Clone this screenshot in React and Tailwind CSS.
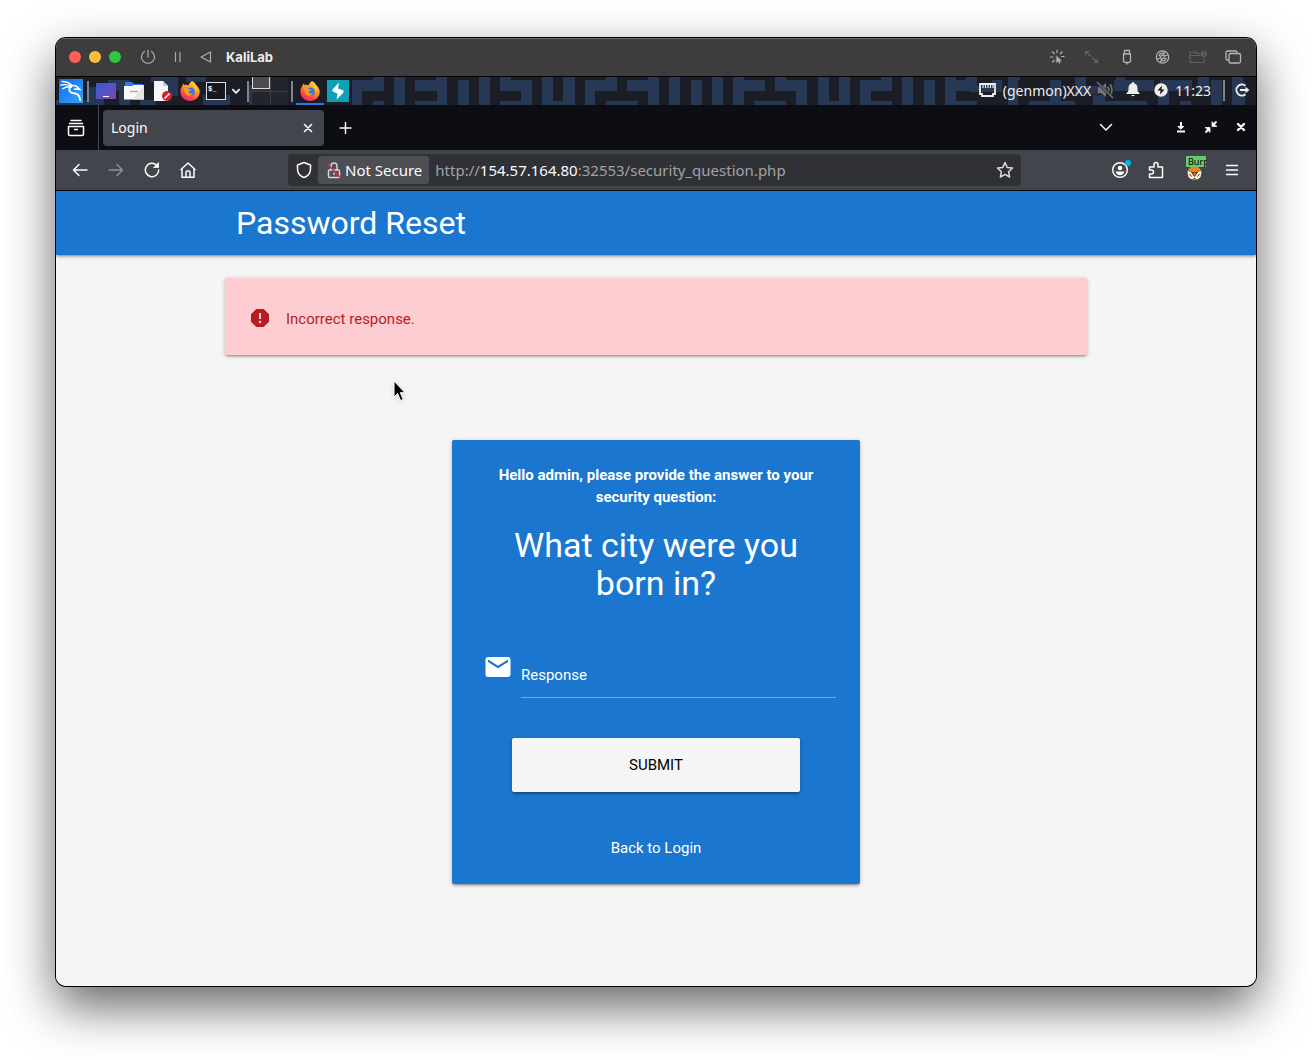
import React, { useState } from 'react';
import { MdEmail, MdReport } from 'react-icons/md';

const PanelPattern = () => (
  <svg
    viewBox="0 0 1200 28"
    preserveAspectRatio="xMinYMin slice"
    className="absolute inset-0 w-full h-full"
    aria-hidden="true"
  >
    <g fill="#263854">
      <path d="M0 23h35v5H0zM32 10h16v18H32zM52 3h22v11H52zM63 14h11v14H63zM84 23h16v5H84zM95 0h27v5H95zM110 5h12v14h-12zM130 0h20v5h-20zM147 18h27v10h-27zM193 8h10v20h-10z" />
      <path d="M296 3h21V0h11v14h-22v14h-10zM317 24h11v4h-11zM338 0h11v28h-11zM359 3h21V0h11v28h-32v-4h22V14h-22zM402 3h11v25h-11zM423 0h11v28h-11zM444 0h11v3h21v25h-32v-4h21V14h-21zM486 0h11v24h10V0h12v28h-33zM529 3h21V0h11v14h-22v14h-10zM550 24h32v4h-32zM571 3h21V0h11v28h-11V14h-21z" />
      <path d="M613 0h11v28h-11zM635 3h11v25h-11zM656 0h11v28h-11zM677 0h11v3h21v11h-21v14h-11zM698 24h32v4h-32zM719 0h11v3h21v25h-11V14h-21zM762 0h11v24h10V0h11v28h-32zM804 3h21V0h11v14h-21v10h21v4h-32zM846 0h11v28h-11zM868 3h11v25h-11zM889 0h11v3h10V0h11v14h-21v10h21v4h-32z" />
      <path d="M952 0h12v3h-12zM936 3h10v12h-32V9h22zM952 3h10v25h-10zM973 24h22v4h-22zM994 3h11v21h14v4h-25zM1019 0h11v9h22v8h-33zM1058 3h40v11h-40zM1037 18h12v6h42v4h-54zM1060 0h9v8h-9zM1104 3h32v11h-32zM1102 14h11v14h-11zM1124 24h11v4h-11zM1142 0h11v14h-11zM1155 3h11v25h-11zM1176 0h11v5h-11zM1176 5h13v23h-13z" />
    </g>
  </svg>
);

const Line = ({ size = 18, width = 1.5, children, className = '' }) => (
  <svg
    width={size}
    height={size}
    viewBox="0 0 18 18"
    fill="none"
    stroke="currentColor"
    strokeWidth={width}
    strokeLinecap="round"
    strokeLinejoin="round"
    className={className}
    aria-hidden="true"
  >
    {children}
  </svg>
);

const KaliDragon = () => (
  <svg
    width="24"
    height="24"
    viewBox="0 0 24 24"
    fill="none"
    stroke="currentColor"
    strokeLinecap="round"
    strokeLinejoin="round"
    aria-hidden="true"
  >
    <path d="M3 2.500c4 0 7.500 1.500 10 4M2 6c4-.8 7-.3 10 1.200M3.500 9.800C6 8.200 9 7.500 12 7.800" strokeWidth="1.300" />
    <path d="M12 6.800c3-.6 5.500 0 7 1.700l2.200 2.300-3.200-.8-2.500.2" strokeWidth="1.500" />
    <path d="M12.500 7.500c-2.500 1-3 4.200-.8 5.700 2 1.300 5.300.8 7.300 2.600 1.500 1.400 2 3 2.200 5.200" strokeWidth="1.900" />
  </svg>
);

const Firefox = () => (
  <svg width="20" height="20" viewBox="0 0 20 20" aria-hidden="true">
    <defs>
      <linearGradient id="ff-body" x1="0.8" y1="0" x2="0.3" y2="1">
        <stop offset="0" stopColor="#ffe03a" />
        <stop offset="0.45" stopColor="#ff9222" />
        <stop offset="0.75" stopColor="#ff4a45" />
        <stop offset="1" stopColor="#e8267c" />
      </linearGradient>
    </defs>
    <path
      fill="url(#ff-body)"
      d="M12 0c3 1.5 3.700 3 4.500 4.500 2 1.500 3.300 4 3.200 6.500-.3 5.300-4.500 9-9.700 9S.4 16 .4 10.500C.4 8 1.300 6 2.600 4.400L3 2.500l1.700 1.600C6 3.500 7.500 3.800 8.500 4.500 9 2.800 10.500 1 12 0z"
    />
    <circle cx="10.500" cy="10.800" r="4.300" fill="#3478e8" />
    <path fill="#ff9c20" d="M4.500 7c2-.7 3.500 0 4.200 1.200l2.300.3c-.3 1.300-1.700 1.700-2.400 2.200.3 1.800 2 2.600 4 1.600-1 2.500-4 3-6 1.500C4.700 12.200 4 9.500 4.500 7z" />
    <path fill="#ffd43a" d="M12 1c1.500 2 1.500 3.500 3 5.500 1 1.500 1.200 3.500.6 5.500 2-2.500 1.500-6-.6-8.300C14 3 12.700 2 12 1z" />
  </svg>
);

const WindowTitleBar = () => (
  <div className="h-[39px] bg-[#3d3d3d] border-b border-black flex items-center justify-between pl-[13px] pr-[14px] shadow-[inset_0_1px_0_#6b6b6b]">
    <div className="flex items-center">
      <div className="flex gap-2">
        <button aria-label="Close window" className="w-3 h-3 rounded-full bg-[#ff5f57]" />
        <button aria-label="Minimize window" className="w-3 h-3 rounded-full bg-[#febc3e]" />
        <button aria-label="Zoom window" className="w-3 h-3 rounded-full bg-[#2bc840]" />
      </div>
      <div className="flex items-center gap-[11px] ml-[18px] text-[#adadad]">
        <button aria-label="Power">
          <Line width={1.2}>
            <path d="M9 2v7M5.500 3.500a6.500 6.500 0 1 0 7 0" />
          </Line>
        </button>
        <button aria-label="Pause">
          <Line width={1.2}>
            <path d="M7.500 4.500v9M12 4.500v9" />
          </Line>
        </button>
        <button aria-label="Restart">
          <Line width={1.2}>
            <path d="M13.500 4v10L4 9z" />
          </Line>
        </button>
      </div>
      <h1 className="ml-[11px] pt-px font-['Inter',sans-serif] text-[13px] font-bold text-[#ececec]">KaliLab</h1>
    </div>
    <div className="flex items-center gap-[17px] text-[#b5b5b5]">
      <button aria-label="Capture input">
        <Line width={1.2}>
          <path d="M8 2v2.500M3.500 4l1.700 1.700M13 4l-1.700 1.700M1.500 9H4M12.500 8.500H15M3.500 14l1.700-1.700" />
          <path d="M7.500 8l5 4.700-2.200.2 1 2.100-1 .4-1-2.200-1.800 1.300z" fill="currentColor" strokeWidth="0.4" />
        </Line>
      </button>
      <button aria-label="Resize" className="text-[#666]">
        <Line width={1.2}>
          <path d="M1.500 7V3.500H5M13.500 11v3.500H10M2 4l4.500 4M13 14l-4.500-4" />
        </Line>
      </button>
      <button aria-label="USB devices">
        <Line width={1.3}>
          <path d="M5.500 6V2.500h5V6M4.500 6h7v7.500L10 14.500H6l-1.500-1zM8 14.500V16" />
        </Line>
      </button>
      <button aria-label="Drives">
        <Line width={1.2}>
          <circle cx="8.500" cy="9" r="6.200" />
          <circle cx="8.500" cy="9" r="1.800" />
          <path d="M5 8a4 4 0 0 1 4-3M12 10a4 4 0 0 1-4 3M10.500 4l-1 3M6.500 14l1-3M13.500 7l-3 1M3.500 11l3-1" />
        </Line>
      </button>
      <button aria-label="Shared folder" className="text-[#626262]">
        <Line width={1.2}>
          <path d="M12 5.500H8L6.500 4H1v10.500h14V10M1 7.500h10" />
          <circle cx="15" cy="6" r="3" fill="currentColor" stroke="none" />
          <path d="M15 4.500v3" stroke="#3d3d3d" />
        </Line>
      </button>
      <button aria-label="Windows">
        <Line width={1.3}>
          <path d="M4.500 12H3.500A1.500 1.500 0 0 1 2 10.500V4.500A1.500 1.500 0 0 1 3.500 3h8A1.500 1.500 0 0 1 13 4.500v1" />
          <rect x="5" y="5.500" width="11.500" height="9.500" rx="1.500" />
        </Line>
      </button>
    </div>
  </div>
);

const Separator = () => <span className="w-[2px] h-[21px] bg-[#80848c] mx-[3px]" />;

const DesktopPanel = () => (
  <div className="relative h-7 bg-[#1c1e27] overflow-hidden">
    <PanelPattern />
    <div className="relative h-full flex items-center justify-between text-[#eeeeec]">
      <div className="flex items-center h-full pl-[3px]">
        <button
          aria-label="Applications"
          className="w-6 h-6 mr-px flex items-center justify-center text-white bg-linear-to-br from-[#1768e8] to-[#35a4fb]"
        >
          <KaliDragon />
        </button>
        <Separator />
        <button aria-label="Show desktop" className="w-7 flex justify-center">
          <span className="w-5 h-4 bg-linear-to-br from-[#2d59cd] to-[#7749b3] flex items-end justify-center pb-[2px]">
            <span className="w-[6px] h-px bg-white" />
          </span>
        </button>
        <button aria-label="File manager" className="w-7 flex justify-center">
          <svg width="20" height="18" viewBox="0 0 20 18">
            <path d="M1 0h7l2 2h9v5H1z" fill="#3679e8" />
            <path d="M0 4h8l2-1h10v14.500H0z" fill="#f8f8f8" />
            <path d="M20 3v14.500H9z" fill="#e5e5e5" />
            <path d="M6 9.500h8" stroke="#aaa" strokeWidth="1.500" />
          </svg>
        </button>
        <button aria-label="Text editor" className="w-7 flex justify-center">
          <svg width="20" height="21" viewBox="0 0 20 21">
            <path d="M2 0h9l5 5v15H2z" fill="#f7f7f7" />
            <path d="M11 0l5 5h-5z" fill="#c9c9c9" />
            <circle cx="15" cy="15" r="5" fill="#d1232a" />
            <path d="M12.500 17.500l5-5" stroke="#fff" strokeWidth="1.600" />
          </svg>
        </button>
        <button aria-label="Firefox" className="w-7 flex justify-center">
          <Firefox />
        </button>
        <button aria-label="Terminal" className="w-6 flex justify-center">
          <svg width="20" height="18" viewBox="0 0 20 18" fill="none">
            <rect x="0.500" y="0.500" width="19" height="17" fill="#15171c" stroke="#dcdcdc" />
            <text x="2" y="9" fontSize="7" fontFamily="Liberation Mono, monospace" fontWeight="700" fill="#fff">
              $_
            </text>
          </svg>
        </button>
        <button aria-label="More launchers" className="w-4 flex justify-center">
          <Line size={16} width={2}>
            <path d="M5.500 7.500L9 11l3.500-3.500" />
          </Line>
        </button>
        <Separator />
        <div className="w-9 h-full grid grid-cols-2 grid-rows-2 gap-px bg-[#3b3d49]">
          <button aria-label="Workspace 1" className="bg-[#2d2f3c] flex">
            <span className="w-full h-3 border border-[#dcdcdc] border-t-0 bg-[#4c4c50]" />
          </button>
          <button aria-label="Workspace 2" className="bg-[#22242e]" />
          <button aria-label="Workspace 3" className="bg-[#22242e]" />
          <button aria-label="Workspace 4" className="bg-[#22242e]" />
        </div>
        <Separator />
        <button
          aria-label="Firefox window"
          className="w-7 h-full flex items-center justify-center shadow-[inset_0_-2px_0_#2b76ec]"
        >
          <Firefox />
        </button>
        <button aria-label="Burp Suite window" className="w-7 flex justify-center">
          <svg width="22" height="22" viewBox="0 0 22 22">
            <path d="M0 0h22v22H0z" fill="#0fa0b8" />
            <path d="M12 2.500L5.500 9.500v2l5 2-1 6L16.500 12.500v-2L11 8.500z" fill="#fff" />
          </svg>
        </button>
      </div>
      <div className="flex items-center h-full pb-[2px] text-[14px]">
        <svg width="17" height="16" viewBox="0 0 17 16" fill="none" className="mr-[7px]" aria-hidden="true">
          <path d="M1 2h15v10h-2v2H3v-2H1z" stroke="currentColor" strokeWidth="1.800" />
          <path d="M4 3v3M6.500 3v3M9 3v3M11.500 3v3M14 3v3" stroke="currentColor" strokeWidth="1.200" />
        </svg>
        <span>(genmon)XXX</span>
        <button aria-label="Volume muted" className="w-7 flex justify-center text-[#74767a]">
          <svg width="18" height="18" viewBox="0 0 18 18" fill="none" stroke="currentColor" strokeWidth="1.500">
            <path d="M2 6h3l5-4v14l-5-4H2z" fill="currentColor" stroke="none" />
            <path d="M12 6q2 3 0 6M14 3q4 6 0 12" />
            <path d="M1 1l16 16" stroke="#1c1e27" strokeWidth="3" />
            <path d="M1 1l16 16" />
          </svg>
        </button>
        <button aria-label="Notifications" className="w-7 flex justify-center">
          <svg width="14" height="16" viewBox="0 0 14 16" fill="currentColor">
            <path d="M7 0a1.500 1.500 0 0 1 1.500 1.500C11 2.200 11.500 4 11.500 7c0 2 .5 3 2 4v1H.5v-1c1.500-1 2-2 2-4 0-3 .5-4.800 3-5.500A1.500 1.500 0 0 1 7 0zM5 13h4q-2 2.500-4 0z" />
          </svg>
        </button>
        <button aria-label="Power manager" className="w-7 flex justify-center">
          <svg width="14" height="14" viewBox="0 0 14 14">
            <circle cx="7" cy="7" r="6.700" fill="currentColor" />
            <path d="M8 2.500L3.500 7.500h3L6 11.500l4.500-5h-3z" fill="#1c1e27" />
          </svg>
        </button>
        <time className="mr-[9px]">11:23</time>
        <Separator />
        <button aria-label="Log out" className="w-7 flex justify-center">
          <svg width="15" height="14" viewBox="0 0 15 14" fill="none" stroke="currentColor" strokeWidth="1.900">
            <path d="M10.500 2.800A5.500 5.500 0 1 0 10.500 11.200M5 7h7" />
            <path d="M10.500 3.800L14.500 7l-4 3.200z" fill="currentColor" stroke="none" />
          </svg>
        </button>
      </div>
    </div>
  </div>
);

const BrowserTabs = () => (
  <div className="h-[45px] bg-[#0d0e13] flex items-center justify-between text-[#fbfbfe]">
    <div className="flex items-center h-full">
      <button aria-label="List all tabs" className="w-[43px] pr-[2px] h-full flex items-center justify-center border-r border-[#45474f]">
        <Line>
          <path d="M4 1.500h10M2.500 4.500h13M1.500 7.500h15v7.500a1.500 1.500 0 0 1-1.500 1.500H3A1.500 1.500 0 0 1 1.500 15zM7.500 10.500h3" />
        </Line>
      </button>
      <div className="ml-1 w-[221px] h-9 rounded bg-[#43454d] flex items-center justify-between pl-2 pr-[7px]">
        <span className="text-[14px]">Login</span>
        <button aria-label="Close tab">
          <Line width={1.6}>
            <path d="M5.500 5.500l7 7M12.500 5.500l-7 7" />
          </Line>
        </button>
      </div>
      <button aria-label="New tab" className="ml-3">
        <Line>
          <path d="M9.500 3.500v11M4 9h11" />
        </Line>
      </button>
    </div>
    <div className="flex items-center pr-[6px] pb-[2px] gap-3">
      <button aria-label="Tab list" className="mr-[45px]">
        <Line>
          <path d="M3.500 6.500L9 12l5.500-5.500" />
        </Line>
      </button>
      <button aria-label="Minimize">
        <Line width={2}>
          <path d="M9 4v6M5 13.500h8" strokeLinecap="butt" />
          <path d="M6.200 8.500h5.600L9 11z" fill="currentColor" strokeWidth="1" />
        </Line>
      </button>
      <button aria-label="Restore">
        <Line width={1.8}>
          <path d="M14 4l-3 3M4 14l3-3" />
          <path d="M10 4v4.500h4.500zM3.500 9.500H8V14z" fill="currentColor" strokeWidth="0.800" />
        </Line>
      </button>
      <button aria-label="Close">
        <Line width={2.4}>
          <path d="M6 6l6 6M12 6l-6 6" />
        </Line>
      </button>
    </div>
  </div>
);

const BrowserToolbar = () => (
  <div className="h-[41px] bg-[#43454d] border-b border-[#0d0e13] flex items-center px-[6px] text-[#fbfbfe]">
    <button aria-label="Back" className="w-9 flex justify-center">
      <Line>
        <path d="M16 9H2.500M8 3.500L2.500 9 8 14.500" />
      </Line>
    </button>
    <button aria-label="Forward" className="w-9 flex justify-center text-[#8f9096]">
      <Line>
        <path d="M2 9h13.500M10 3.500L15.500 9 10 14.500" />
      </Line>
    </button>
    <button aria-label="Reload" className="w-9 flex justify-center">
      <Line>
        <path d="M13.500 4A6.700 6.700 0 1 0 15.700 9" />
        <path d="M15.500 2v4.500H11z" fill="currentColor" strokeWidth="0.800" />
      </Line>
    </button>
    <button aria-label="Home" className="w-9 flex justify-center">
      <Line>
        <path d="M2 8.500L9 2l7 6.500M3 8v8.300h12V8M7 16v-4.500a1.500 1.500 0 0 1 1.500-1.500h1a1.500 1.500 0 0 1 1.500 1.500V16" />
      </Line>
    </button>
    <div className="flex-1 h-8 ml-[82px] mr-[81px] rounded bg-[#303136] flex items-center px-[7px] text-[15px]">
      <Line>
        <path d="M9 1.500l6.500 2.500v4c0 4-2.500 7-6.500 8.500C5 15 2.500 12 2.500 8V4z" />
      </Line>
      <button className="h-7 ml-[5px] px-[7px] rounded-[3px] bg-[#4c4e54] flex items-center gap-[2px] whitespace-nowrap">
        <Line className="text-[#d5d5da]">
          <rect x="3.500" y="9" width="11" height="7.500" rx="1" />
          <path d="M6 9V5a3 3 0 0 1 6 0v4M9 12v1.500" />
          <path d="M3 3.500L15.500 16.500" stroke="#e22850" />
        </Line>
        Not Secure
      </button>
      <div className="flex-1 ml-[6px] text-[#a1a2a8]">
        http://<span className="text-[#fbfbfe]">154.57.164.80</span>:32553/security_question.php
      </div>
      <button aria-label="Bookmark this page">
        <Line className="text-[#d9dade]">
          <path d="M9 1.500l2.200 4.900 5.300.6-3.900 3.700 1 5.300L9 13.400 4.400 16l1-5.300L1.500 7l5.300-.6z" />
        </Line>
      </button>
    </div>
    <button aria-label="Account" className="relative w-9 flex justify-center">
      <Line>
        <circle cx="9" cy="9" r="7.300" />
        <circle cx="9" cy="7" r="2.300" fill="currentColor" stroke="none" />
        <path d="M4.500 10.500h9q-1 3.700-4.500 3.700t-4.500-3.700z" fill="currentColor" stroke="none" />
      </Line>
      <span className="absolute right-[7px] -top-[1px] w-[6px] h-[6px] rounded-full bg-[#00b3f4]" />
    </button>
    <button aria-label="Extensions" className="w-9 flex justify-center">
      <Line>
        <path d="M2.500 16.500v-3.500h2a2 2 0 0 0 0-4h-2V6h4.500V3.500a2 2 0 0 1 4 0V6h4.500v10.500z" />
      </Line>
    </button>
    <button aria-label="FoxyProxy: Burp" className="relative w-10 h-6 flex items-end justify-center">
      <svg width="16" height="16" viewBox="0 0 16 16" aria-hidden="true">
        <circle cx="8.500" cy="7" r="7" fill="#e98324" />
        <path d="M1.500 5l5 2 2 2 2-2 5-2-1 6-2.500 2H5l-2.500-2z" fill="#f6eee5" />
        <path d="M5.500 6l3 4.500 3-4.500-3 1zM3.500 8l2 2.500M13.500 8l-2 2.500M7.500 12.500h2" fill="#e98324" stroke="#593018" />
      </svg>
      <span className="absolute top-[-2px] left-3 w-5 h-[11px] overflow-hidden rounded-[1px] bg-[#68c96c] pl-[2px] text-left text-[9px] leading-[11px] text-black">
        Burp
      </span>
    </button>
    <button aria-label="Menu" className="w-9 flex justify-center">
      <Line>
        <path d="M3.500 4.500h11M3.500 9h11M3.500 13.500h11" />
      </Line>
    </button>
  </div>
);

const SecurityQuestion = () => {
  const [response, setResponse] = useState('');

  return (
    <div className="relative flex-1 bg-[#f5f5f5] pb-[102px] font-[Roboto,sans-serif] text-[15px]">
      <header className="h-16 bg-[#1b76cf] shadow-[0_2px_2px_0_#00000024,0_3px_1px_-2px_#0000001f,0_1px_5px_0_#00000033]">
        <div className="w-[70%] h-full mx-auto flex items-center text-white text-[32px]">
          <a href="#reset">Password Reset</a>
        </div>
      </header>

      <div className="w-[70%] mx-auto">
        <div
          role="alert"
          className="-mx-[11px] mt-[23px] h-[77px] rounded-[2px] bg-[#fecdd2] text-[#b71c1f] flex items-center pt-[2px] pl-[23px] gap-[14px] shadow-[0_2px_2px_0_#00000024,0_3px_1px_-2px_#0000001f,0_1px_5px_0_#00000033]"
        >
          <MdReport size={24} />
          <span className="pt-1">Incorrect response.</span>
        </div>
      </div>

      <form
        onSubmit={(e) => e.preventDefault()}
        className="w-[408px] mx-auto mt-[85px] p-6 rounded-[2px] bg-[#1b76cf] text-white text-center shadow-[0_2px_2px_0_#00000024,0_3px_1px_-2px_#0000001f,0_1px_5px_0_#00000033]"
      >
        <p className="font-bold leading-[22px]">
          Hello admin, please provide the answer to your security question:
        </p>
        <h3 className="mt-[18px] px-6 text-[34px] leading-[38px]">What city were you born in?</h3>
        <div className="mt-[50px] pl-[7px] flex gap-2">
          <MdEmail size={30} className="shrink-0" />
          <div className="relative flex-1">
            <input
              id="response"
              type="text"
              value={response}
              onChange={(e) => setResponse(e.target.value)}
              className="w-full h-[46px] border-b border-[#9e9e9e] focus:outline-none"
            />
            {!response && (
              <label htmlFor="response" className="absolute left-0 top-0 leading-[46px] cursor-text">
                Response
              </label>
            )}
          </div>
        </div>
        <div className="mt-10 px-9">
          <button
            type="submit"
            className="w-full h-[54px] rounded-[2px] bg-[#f5f5f5] text-black uppercase shadow-[0_2px_2px_0_#00000024,0_3px_1px_-2px_#0000001f,0_1px_5px_0_#00000033]"
          >
            Submit
          </button>
        </div>
        <a href="#login" className="block mt-11 leading-6">
          Back to Login
        </a>
      </form>

      <svg
        width="14"
        height="22"
        viewBox="0 0 14 22"
        className="absolute left-[337px] top-[189px] drop-shadow-sm"
        aria-hidden="true"
      >
        <path d="M1 1v16l3.600-3.400 3 7 2.700-1.200-3-6.700H12z" fill="#000" stroke="#fff" />
      </svg>
    </div>
  );
};

const App = () => (
  <div className="min-h-screen bg-white flex flex-col px-14 pt-[38px] pb-[74px]">
    <div className="flex-1 flex flex-col rounded-[10px] shadow-[0_0_0_1px_#000,0_20px_50px_0_#0000009e]">
      <div className="flex-1 flex flex-col rounded-[10px] overflow-hidden font-['Noto_Sans',sans-serif]">
        <WindowTitleBar />
        <DesktopPanel />
        <BrowserTabs />
        <BrowserToolbar />
        <SecurityQuestion />
      </div>
    </div>
  </div>
);

export default App;
